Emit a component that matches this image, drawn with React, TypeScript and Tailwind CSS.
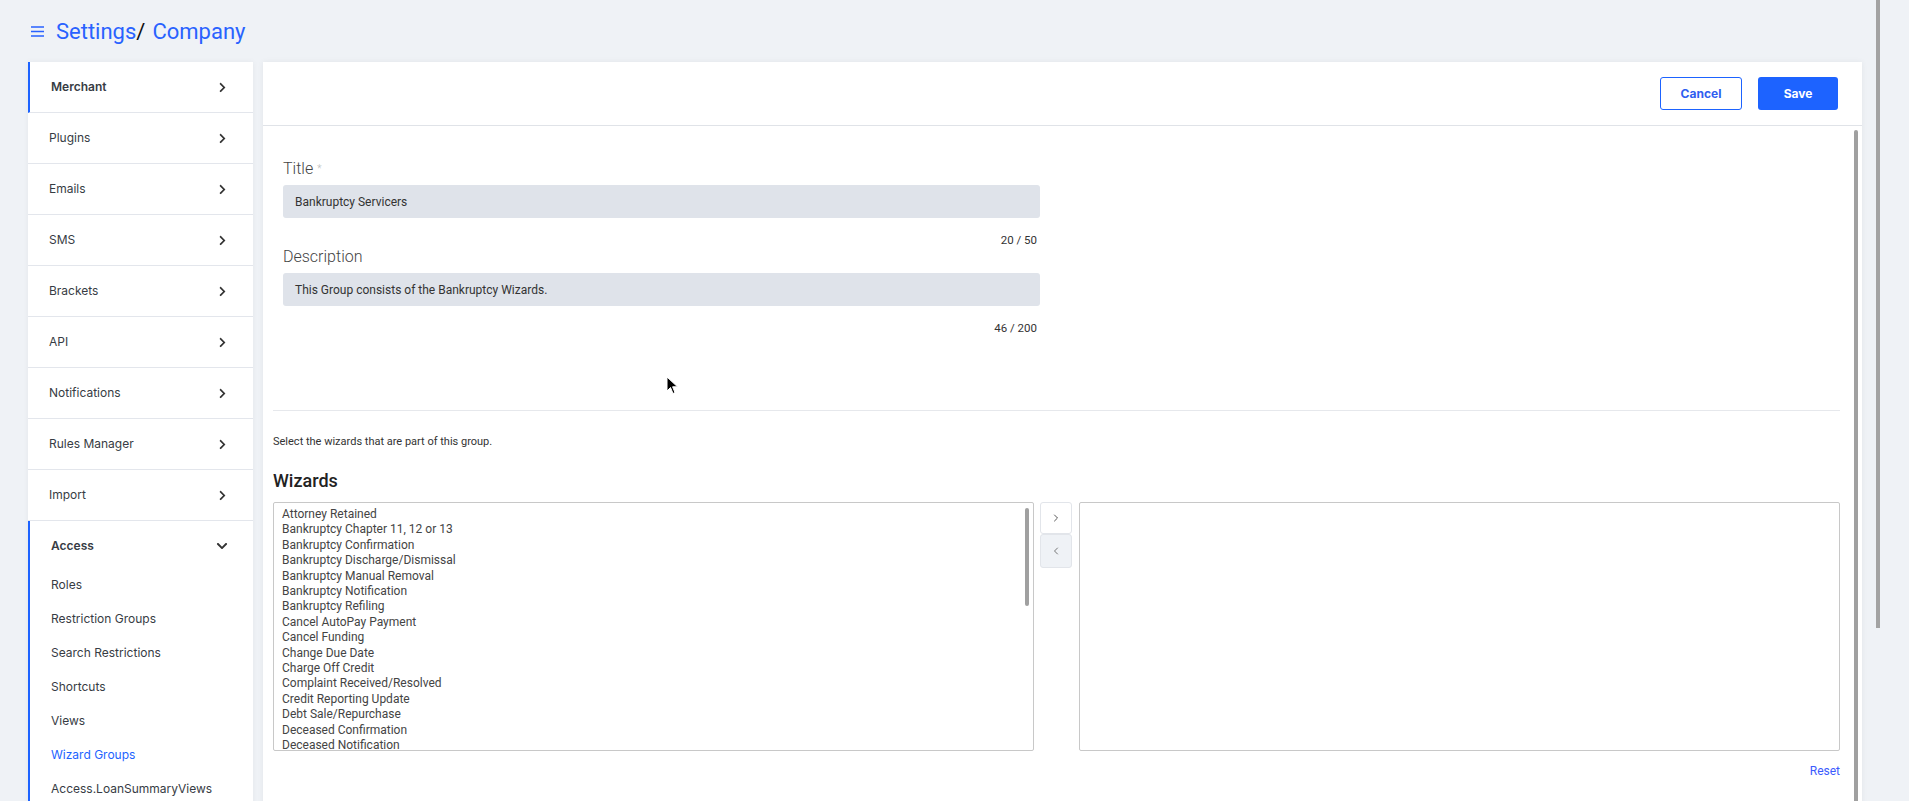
import React from "react";
import { FaChevronRight, FaChevronDown } from "react-icons/fa";
import { ChevronRight, ChevronLeft } from "lucide-react";

const menu = [
  "Plugins",
  "Emails",
  "SMS",
  "Brackets",
  "API",
  "Notifications",
  "Rules Manager",
  "Import",
];

const accessItems = [
  "Roles",
  "Restriction Groups",
  "Search Restrictions",
  "Shortcuts",
  "Views",
  "Wizard Groups",
  "Access.LoanSummaryViews",
];

const wizards = [
  "Attorney Retained",
  "Bankruptcy Chapter 11, 12 or 13",
  "Bankruptcy Confirmation",
  "Bankruptcy Discharge/Dismissal",
  "Bankruptcy Manual Removal",
  "Bankruptcy Notification",
  "Bankruptcy Refiling",
  "Cancel AutoPay Payment",
  "Cancel Funding",
  "Change Due Date",
  "Charge Off Credit",
  "Complaint Received/Resolved",
  "Credit Reporting Update",
  "Debt Sale/Repurchase",
  "Deceased Confirmation",
  "Deceased Notification",
  "Dispute Received",
  "Payment Plan",
];

const Sidebar: React.FC = () => (
  <div className="w-[225px] shrink-0 bg-white shadow-[0_0_6px_rgba(0,0,0,0.05)] font-['Inter',sans-serif] text-[12px] text-[#373c44]">
    <div className="flex h-[51px] items-center justify-between border-b border-l-2 border-b-[#e3e6ec] border-l-[#1d63ff] pl-[21px] pr-[25px]">
      <span className="font-semibold">Merchant</span>
      <FaChevronRight className="text-[#333] text-[11px]" />
    </div>
    {menu.map((m) => (
      <div
        key={m}
        className="flex h-[51px] items-center justify-between border-b border-[#e3e6ec] pl-[21px] pr-[25px]"
      >
        <span>{m}</span>
        <FaChevronRight className="text-[#333] text-[11px]" />
      </div>
    ))}
    <div className="border-l-2 border-[#1d63ff] pb-[40px]">
      <div className="flex h-[47px] items-center justify-between pl-[21px] pr-[25px] pt-[3px]">
        <span className="font-semibold">Access</span>
        <FaChevronDown className="text-[#333] text-[12px]" />
      </div>
      {accessItems.map((a) => (
        <div
          key={a}
          className={`flex h-[34px] items-center pl-[21px] ${
            a === "Wizard Groups" ? "text-[#1d63ff]" : ""
          }`}
        >
          {a}
        </div>
      ))}
    </div>
  </div>
);

const Field: React.FC<{
  label: string;
  value: string;
  count: string;
  required?: boolean;
}> = ({ label, value, count, required }) => (
  <div>
    <div className="h-[20px] text-[16px] font-light leading-[20px] text-[#444]">
      {label}
      {required && <span className="ml-[4px] align-top text-[10px] text-[#bbb]">*</span>}
    </div>
    <div className="mt-[6px] flex h-[33px] items-center rounded-[3px] bg-[#dfe3ea] pl-[12px] text-[12px] text-[#333]">
      {value}
    </div>
    <div className="mt-[15px] h-[14px] pr-[3px] text-right text-[11.5px] leading-[14px] text-[#333]">
      {count}
    </div>
  </div>
);

export default function App() {
  return (
    <div className="relative h-[801px] w-full overflow-hidden bg-[#eff2f6] font-['Roboto',sans-serif]">
      <div className="flex h-[62px] items-center pl-[31px]">
        <svg width="13" height="13" viewBox="0 0 13 13" className="mr-[12px]">
          <path d="M0 2h13M0 6.5h13M0 11h13" stroke="#2962ff" strokeWidth="1.6" />
        </svg>
        <span className="text-[22px] text-[#2962ff]">Settings</span>
        <span className="text-[22px] text-[#111]">/</span>
        <span className="ml-[7px] text-[22px] text-[#2962ff]">Company</span>
      </div>

      <div className="flex gap-[10px] pl-[28px]">
        <Sidebar />

        <div className="flex w-[1599px] shrink-0 flex-col bg-white shadow-[0_0_6px_rgba(0,0,0,0.06)]">
          <div className="flex h-[64px] items-center justify-end gap-[16px] border-b border-[#e0e3e8] pr-[24px] font-['Inter',sans-serif] text-[12px] font-bold">
            <button className="h-[33px] w-[82px] rounded-[3px] border border-[#1d63ff] text-[#2f5ef0]">
              Cancel
            </button>
            <button className="h-[33px] w-[80px] rounded-[3px] bg-[#1d63ff] text-white">
              Save
            </button>
          </div>

          <div className="relative h-[700px]">
            <div className="absolute right-[4px] top-[4px] h-[680px] w-[4px] rounded-full bg-[#a0a0a0]" />

            <div className="w-[777px] pl-[20px] pt-[33px]">
              <Field label="Title" value="Bankruptcy Servicers" count="20 / 50" required />
              <Field
                label="Description"
                value="This Group consists of the Bankruptcy Wizards."
                count="46 / 200"
              />
            </div>

            <div className="ml-[10px] mr-[22px] mt-[75px] border-t border-[#e6e8ec]">
              <p className="mt-[24px] text-[11px] leading-[14px] text-[#333]">
                Select the wizards that are part of this group.
              </p>
              <h2 className="mt-[21px] text-[18px] font-medium leading-[22px] text-[#222]">
                Wizards
              </h2>
              <div className="mt-[10px] flex h-[249px] gap-[6px]">
                <div className="relative h-full w-[761px] overflow-hidden rounded-[2px] border border-[#c8c8c8] pl-[8px] pt-[4px]">
                  {wizards.map((w) => (
                    <div key={w} className="text-[12px] leading-[15.4px] text-[#444]">
                      {w}
                    </div>
                  ))}
                  <div className="absolute right-[4px] top-[5px] h-[98px] w-[4px] rounded-full bg-[#a0a0a0]" />
                </div>
                <div className="flex w-[32px] flex-col">
                  <button className="flex h-[32px] items-center justify-center rounded-[3px] border border-[#e2e5ea] bg-white">
                    <ChevronRight size={12} strokeWidth={1.8} className="text-[#444]" />
                  </button>
                  <button className="flex h-[34px] items-center justify-center rounded-[3px] border border-[#e2e5ea] bg-[#eff2f6]">
                    <ChevronLeft size={12} strokeWidth={1.8} className="text-[#666]" />
                  </button>
                </div>
                <div className="ml-[1px] h-full w-[761px] rounded-[2px] border border-[#c8c8c8]" />
              </div>
              <div className="mt-[12px] text-right text-[12px] leading-[16px] text-[#3b5bfd]">
                Reset
              </div>
            </div>
          </div>
        </div>
      </div>

      <div className="absolute right-[29px] top-0 h-[628px] w-[4px] bg-[#a3a3a3]" />

      <svg
        width="13"
        height="20"
        viewBox="0 0 13 20"
        className="absolute left-[666px] top-[376px]"
      >
        <path
          d="M1 1 L1 15 L4.5 11.5 L7 17.5 L9 16.6 L6.6 10.8 L11.5 10.8 Z"
          fill="#000"
          stroke="#fff"
          strokeWidth="1"
        />
      </svg>
    </div>
  );
}
